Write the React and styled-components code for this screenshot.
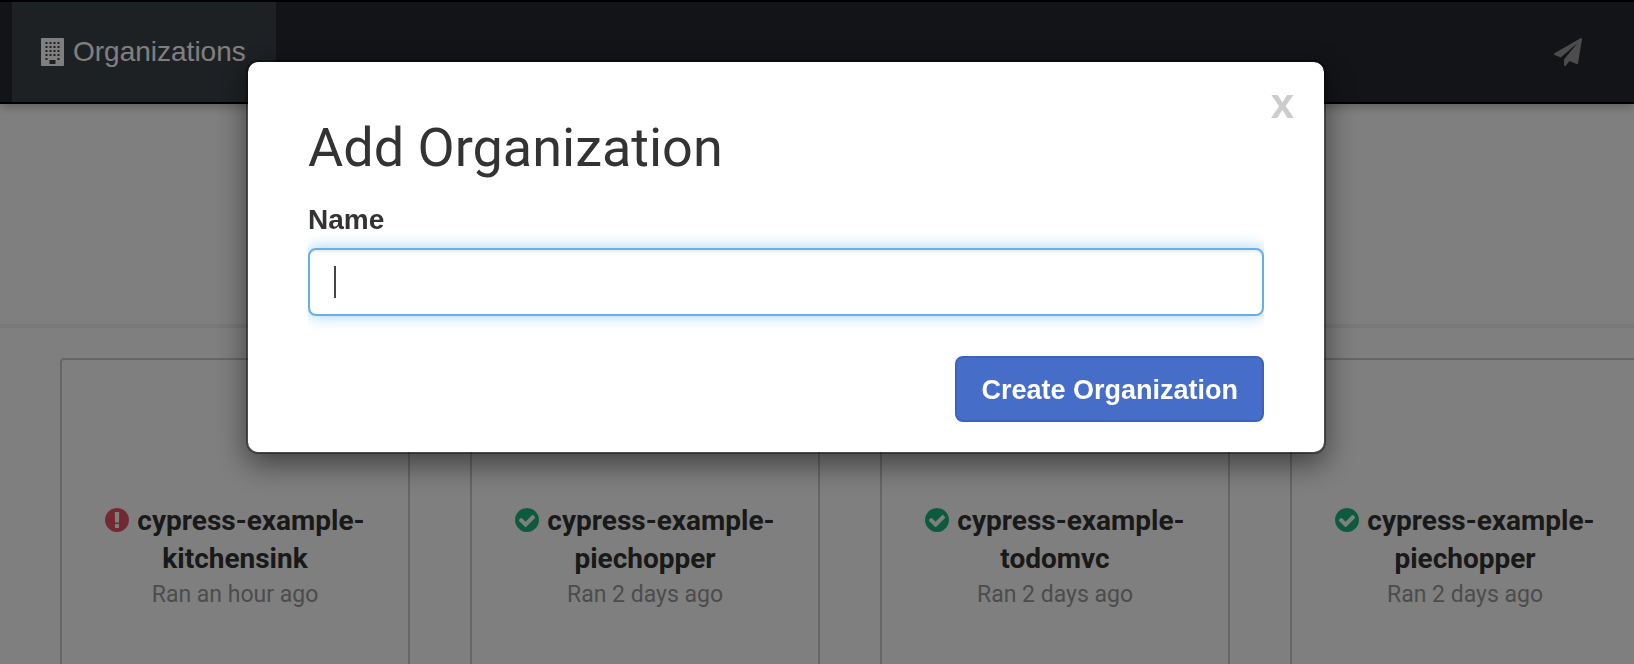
import React from "react";
import styled, { createGlobalStyle } from "styled-components";

const GlobalStyle = createGlobalStyle`
  *, *::before, *::after { box-sizing: border-box; }
  html, body { margin: 0; min-height: 100%; }
  body {
    background: #fff;
    color: #333;
    font: 28px/40px "Liberation Sans", Arial, sans-serif;
    overflow: hidden;
  }
`;

const Page = styled.div`
  min-height: 100vh;
`;

const Navbar = styled.header`
  position: relative;
  display: flex;
  justify-content: space-between;
  height: 104px;
  padding: 0 52px 0 12px;
  background: #26282f;
  border: solid #000;
  border-width: 2px 0;
  box-shadow: 0 2px 10px rgba(0, 0, 0, 0.3);
`;

const NavTab = styled.a`
  display: flex;
  align-items: center;
  gap: 9px;
  padding: 0 30px 0 29px;
  background: #3c4249;
  color: #fff;
  text-decoration: none;
`;

const NavButton = styled.button`
  display: flex;
  align-items: center;
  padding: 0;
  border: 0;
  background: none;
  color: #999;
`;

const Icon = styled.svg`
  flex: none;
  width: ${(p) => p.$width}px;
  height: ${(p) => p.$height || p.$width}px;
  fill: currentColor;
`;

const Toolbar = styled.div`
  height: 224px;
  border-bottom: 4px solid #f0f0f0;
`;

const Projects = styled.ul`
  display: grid;
  grid-template-columns: repeat(4, 350px);
  gap: 60px;
  margin: 0;
  padding: 30px 60px;
  list-style: none;
  font-family: Roboto, "Noto Sans", sans-serif;
`;

const Card = styled.li`
  height: 400px;
  padding: 142px 30px 0;
  border: 2px solid #ccc;
  border-radius: 4px;
  text-align: center;
`;

const CardTitle = styled.h2`
  margin: 0;
  font-size: 28px;
  line-height: 38px;
  font-weight: 700;

  ${Icon} {
    margin-right: 8px;
    vertical-align: -2px;
    color: ${(p) => (p.$failed ? "#e45464" : "#1db57c")};
  }
`;

const LastRun = styled.p`
  margin: 0;
  font-size: 23px;
  line-height: 34px;
  color: #999;
`;

const Backdrop = styled.div`
  position: fixed;
  inset: 0;
  display: flex;
  justify-content: center;
  align-items: flex-start;
  padding: 60px 62px 0 0;
  background: rgba(0, 0, 0, 0.5);
`;

const Dialog = styled.form`
  position: relative;
  width: 1080px;
  max-width: 100%;
  padding: 56px 60px 30px;
  background: #fff;
  background-clip: padding-box;
  border: 2px solid rgba(0, 0, 0, 0.4);
  border-radius: 12px;
  box-shadow: 0 10px 30px rgba(0, 0, 0, 0.5);
`;

const CloseButton = styled.button`
  position: absolute;
  top: 18px;
  right: 30px;
  padding: 0;
  border: 0;
  background: none;
  color: #ccc;
  font: 700 42px/48px "Liberation Sans", Arial, sans-serif;
`;

const Title = styled.h1`
  margin: 0 0 22px;
  font: 400 54px/60px Roboto, "Noto Sans", sans-serif;
`;

const Label = styled.label`
  display: block;
  margin-bottom: 8px;
  font-weight: 700;
`;

/* The glow is cut off at the field's left and right edges. */
const TextField = styled.input`
  display: block;
  width: 100%;
  height: 68px;
  padding: 12px 24px;
  border: 2px solid #66afe9;
  border-radius: 8px;
  outline: 0;
  background: #fff linear-gradient(#444, #444) 24px center / 2px 32px no-repeat;
  box-shadow: inset 0 2px 2px rgba(0, 0, 0, 0.075), 0 0 16px rgba(102, 175, 233, 0.6);
  clip-path: inset(-20px 0);
  caret-color: transparent;
  font: inherit;
`;

const Actions = styled.div`
  display: flex;
  justify-content: flex-end;
  margin-top: 40px;
`;

const PrimaryButton = styled.button`
  height: 66px;
  padding: 2px 24px 0;
  border: 2px solid #3b61c1;
  border-radius: 8px;
  background: #466ec9;
  color: #fff;
  font: 700 27px/40px "Liberation Sans", Arial, sans-serif;
`;

const DISC =
  "M1536 768q0 209-103 385.500t-279.500 279.500t-385.500 103t-385.500-103t-279.500-279.500t-103-385.500t103-385.500t279.500-279.500t385.500-103t385.500 103t279.500 279.500t103 385.500z";

const BuildingIcon = () => (
  <Icon viewBox="0 0 1472 1792" $width={23} $height={28} aria-hidden="true">
    <path
      fillRule="evenodd"
      d={
        "M64 0H1408q64 0 64 64V1728q0 64-64 64H64q-64 0-64-64V64q0-64 64-64z" +
        "M544 1408h384v256h-384z" +
        [256, 512, 768, 1024, 1280]
          .flatMap((y) =>
            (y === 1280 ? [288, 1056] : [288, 544, 800, 1056]).map(
              (x) => `M${x} ${y}h128v128h-128z`
            )
          )
          .join("")
      }
    />
  </Icon>
);

const PlaneIcon = () => (
  <Icon viewBox="0 0 1792 1792" $width={28} aria-hidden="true">
    <path d="M1764 11q33 24 27 64l-256 1536q-5 29-32 45-14 8-31 8-11 0-24-5l-453-185-242 295q-18 23-49 23-13 0-22-4-19-7-30.500-23.500t-11.500-36.500v-349l864-1059-1069 925-395-162q-37-14-40-55-2-40 32-59l1664-960q15-9 32-9 20 0 36 11z" />
  </Icon>
);

const PassedIcon = () => (
  <Icon viewBox="0 0 1536 1536" $width={24} aria-hidden="true">
    <path
      fillRule="evenodd"
      d={
        DISC +
        "M1284 606q0-28-18-46l-91-90q-19-19-45-19t-45 19l-408 407l-226-226q-19-19-45-19t-45 19l-91 90q-18 18-18 46q0 27 18 45l362 362q19 19 45 19q27 0 46-19l543-543q18-18 18-45z"
      }
    />
  </Icon>
);

const FailedIcon = () => (
  <Icon viewBox="0 0 1536 1536" $width={24} aria-hidden="true">
    <path
      fillRule="evenodd"
      d={
        DISC +
        "M896 1247v-190q0-14-9-23.500t-22-9.500h-192q-13 0-23 10t-10 23v190q0 13 10 23t23 10h192q13 0 22-9.500t9-23.500z" +
        "M894 903l18-621q0-12-10-18-10-8-24-8h-220q-14 0-24 8-10 6-10 18l17 621q0 10 10 17.500t24 7.500h185q14 0 23.500-7.500t10.500-17.500z"
      }
    />
  </Icon>
);

const projects = [
  { id: 1, name: ["cypress-example-", "kitchensink"], ran: "Ran an hour ago", failed: true },
  { id: 2, name: ["cypress-example-", "piechopper"], ran: "Ran 2 days ago" },
  { id: 3, name: ["cypress-example-", "todomvc"], ran: "Ran 2 days ago" },
  { id: 4, name: ["cypress-example-", "piechopper"], ran: "Ran 2 days ago" },
];

export default function App() {
  return (
    <Page>
      <GlobalStyle />
      <Navbar>
        <NavTab href="#organizations">
          <BuildingIcon />
          Organizations
        </NavTab>
        <NavButton type="button" aria-label="Send feedback">
          <PlaneIcon />
        </NavButton>
      </Navbar>
      <Toolbar />
      <Projects>
        {projects.map(({ id, name, ran, failed }) => (
          <Card key={id}>
            <CardTitle $failed={failed}>
              {failed ? <FailedIcon /> : <PassedIcon />}
              {name[0]}
              <br />
              {name[1]}
            </CardTitle>
            <LastRun>{ran}</LastRun>
          </Card>
        ))}
      </Projects>
      <Backdrop>
        <Dialog role="dialog" aria-modal="true" aria-labelledby="dialog-title">
          <CloseButton type="button" aria-label="Close">
            x
          </CloseButton>
          <Title id="dialog-title">Add Organization</Title>
          <Label htmlFor="org-name">Name</Label>
          <TextField id="org-name" type="text" />
          <Actions>
            <PrimaryButton type="submit">Create Organization</PrimaryButton>
          </Actions>
        </Dialog>
      </Backdrop>
    </Page>
  );
}
